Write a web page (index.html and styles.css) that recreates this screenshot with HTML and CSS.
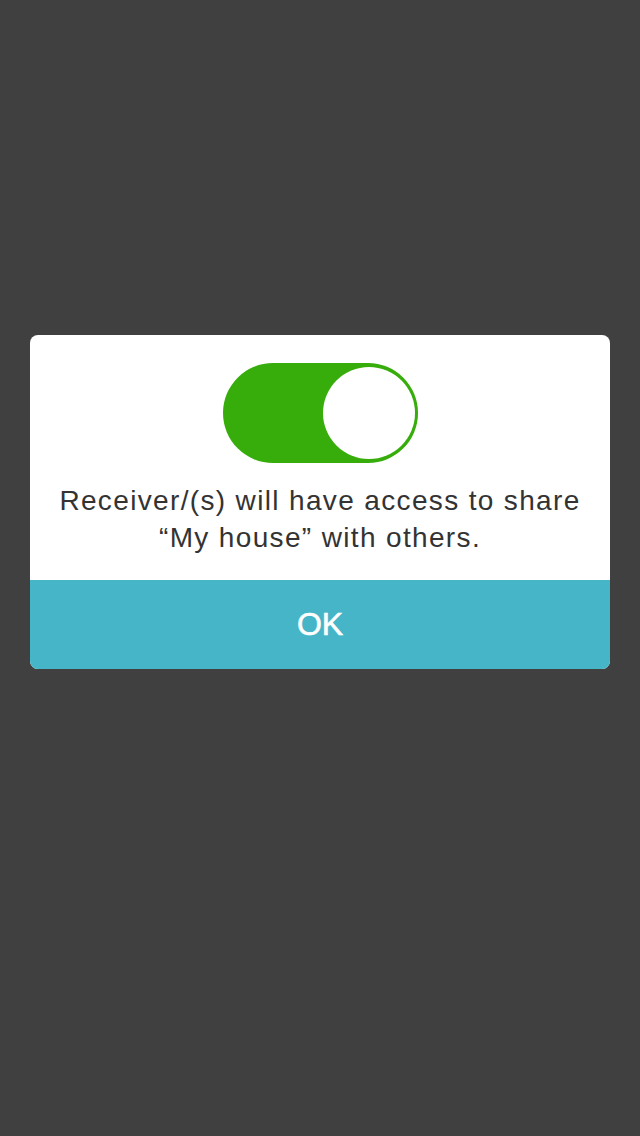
FILE: index.html
```html
<!DOCTYPE html>
<html>
<head>
<meta charset="utf-8">
<link rel="stylesheet" href="styles.css">
</head>
<body>
<div class="screen">
  <div class="dialog">
    <div class="body">
      <div class="toggle"><div class="knob"></div></div>
      <p class="msg">Receiver/(s) will have access to share<br>“My house” with others.</p>
    </div>
    <div class="ok">OK</div>
  </div>
</div>
</body>
</html>
```

FILE: styles.css
```css
html, body {
  margin: 0;
  padding: 0;
  background: #404040;
}
.screen {
  width: 640px;
  height: 1136px;
  display: flex;
  flex-direction: column;
  align-items: center;
  padding-top: 335px;
  box-sizing: border-box;
}
.dialog {
  width: 580px;
  background: #fff;
  border-radius: 8px;
  overflow: hidden;
  font-family: "Liberation Sans", Arial, sans-serif;
}
.body {
  height: 245px;
  display: flex;
  flex-direction: column;
  align-items: center;
  padding-top: 28px;
  box-sizing: border-box;
}
.toggle {
  width: 195px;
  height: 100px;
  border-radius: 50px;
  background: #36ad0b;
  display: flex;
  justify-content: flex-end;
  align-items: center;
  padding-right: 3px;
  box-sizing: border-box;
}
.knob {
  width: 92px;
  height: 92px;
  border-radius: 50%;
  background: #fff;
}
.msg {
  margin: 19px 0 0;
  font-size: 28px;
  line-height: 37px;
  letter-spacing: 1.35px;
  color: #333;
  text-align: center;
}
.ok {
  height: 89px;
  background: #45b5c7;
  color: #fff;
  font-size: 32px;
  -webkit-text-stroke: 0.6px #fff;
  display: flex;
  align-items: center;
  justify-content: center;
}
```
